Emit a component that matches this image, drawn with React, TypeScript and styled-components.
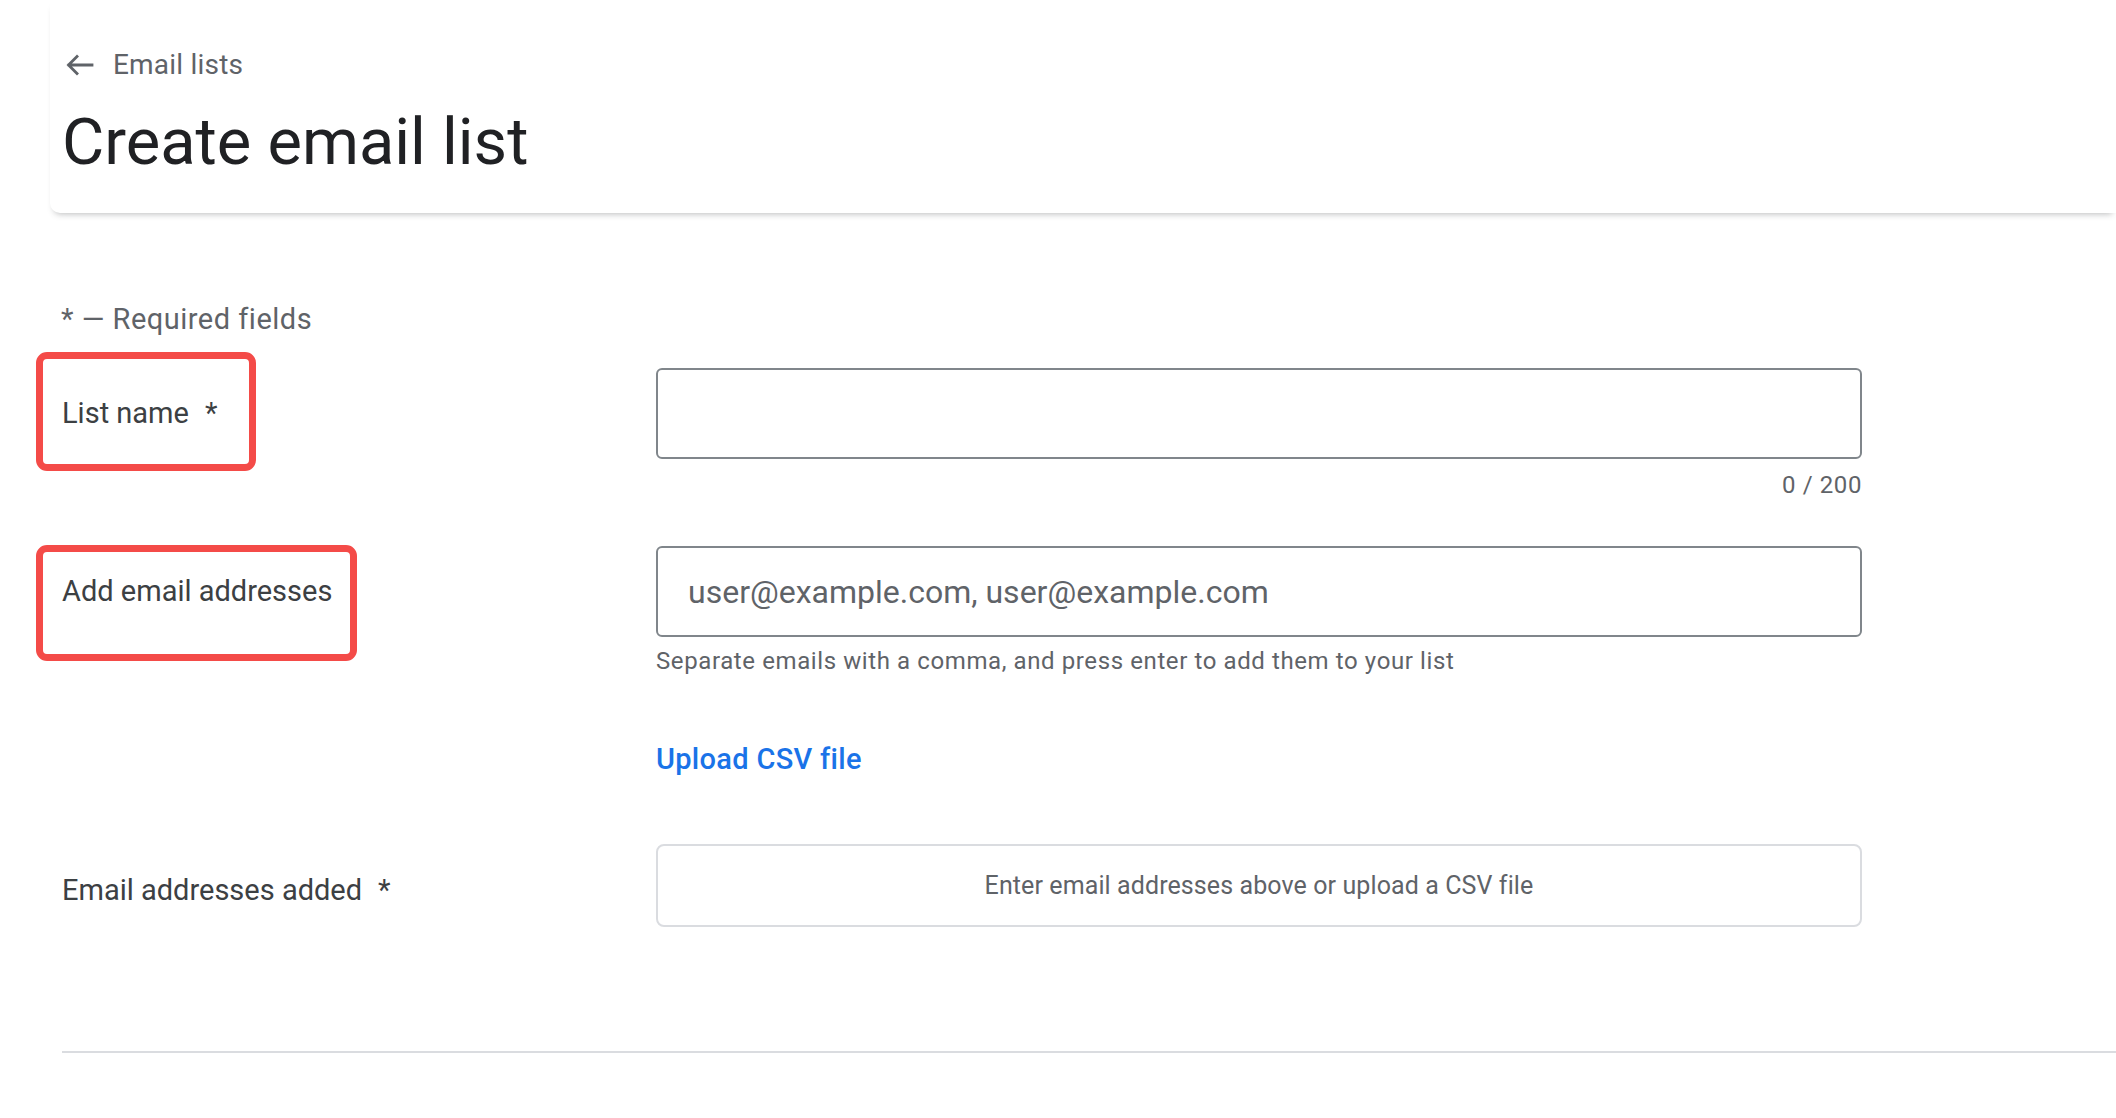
import styled, { createGlobalStyle } from 'styled-components'

const GlobalStyle = createGlobalStyle`
  body {
    margin: 0;
    background: #ffffff;
    font-family: Roboto, "Liberation Sans", Arial, sans-serif;
    color: #3c4043;
  }
`

const Page = styled.div`
  min-height: 100vh;
  overflow: hidden;
  background: #ffffff;
`

const Header = styled.header`
  margin-left: 50px;
  padding: 51px 0 39px 12px;
  background: #ffffff;
  border-bottom-left-radius: 10px;
  box-shadow: 0 5px 6px -4px rgba(60, 64, 67, 0.35);
`

const Breadcrumb = styled.a`
  display: flex;
  align-items: center;
  gap: 17px;
  height: 28px;
  font-size: 28px;
  line-height: 28px;
  letter-spacing: 0.2px;
  color: #5f6368;
  text-decoration: none;
`

const Title = styled.h1`
  margin: 31px 0 0;
  font-size: 65px;
  line-height: 64px;
  font-weight: 400;
  color: #202124;
`

const Form = styled.div`
  padding: 92px 0 0 36px;
`

const RequiredNote = styled.p`
  margin: 0 0 19px 25px;
  font-size: 29px;
  line-height: 28px;
  letter-spacing: 0.5px;
  color: #5f6368;
`

const Row = styled.div<{ $gap: number }>`
  display: grid;
  grid-template-columns: 620px 1206px;
  align-items: start;
  margin-top: ${p => p.$gap}px;
`

const Label = styled.label<{ $boxed?: boolean; $pad: string }>`
  justify-self: start;
  border: 7px solid ${p => (p.$boxed ? '#f44b48' : 'transparent')};
  border-radius: 11px;
  padding: ${p => p.$pad};
  font-size: 29px;
  line-height: 28px;
  color: #3c4043;
  white-space: nowrap;
`

const Req = styled.span`
  margin-left: 16px;
`

const Field = styled.div<{ $offset: number }>`
  display: flex;
  flex-direction: column;
  margin-top: ${p => p.$offset}px;
`

const TextInput = styled.input<{ $height: number }>`
  box-sizing: border-box;
  width: 100%;
  height: ${p => p.$height}px;
  border: 2px solid #80868b;
  border-radius: 6px;
  padding: 0 30px;
  font-family: inherit;
  font-size: 32px;
  color: #202124;
  background: #ffffff;
  outline: none;

  &::placeholder {
    color: #5f6368;
  }
`

const Hint = styled.div<{ $right?: boolean }>`
  align-self: ${p => (p.$right ? 'flex-end' : 'flex-start')};
  font-size: 24px;
  line-height: 28px;
  letter-spacing: 0.6px;
  color: #5f6368;
`

const Counter = styled(Hint)`
  margin-top: 12px;
`

const Helper = styled(Hint)`
  margin-top: 10px;
`

const UploadLink = styled.a`
  align-self: flex-start;
  margin-top: 70px;
  font-size: 29px;
  line-height: 28px;
  letter-spacing: 0.3px;
  font-weight: 500;
  color: #1a73e8;
  text-decoration: none;
`

const AddedBox = styled.div`
  box-sizing: border-box;
  height: 83px;
  border: 2px solid #dadce0;
  border-radius: 8px;
  display: flex;
  align-items: center;
  justify-content: center;
  font-size: 25px;
  letter-spacing: 0.1px;
  color: #5f6368;
`

const Divider = styled.hr`
  margin: 119px 0 0 26px;
  border: none;
  height: 2px;
  background: #dadce0;
`

function BackArrow() {
  return (
    <svg width="34" height="28" viewBox="0 0 34 28" fill="none">
      <path
        d="M30 14H7M15 5.5L6.5 14L15 22.5"
        stroke="#5f6368"
        strokeWidth="2.8"
        strokeLinecap="square"
      />
    </svg>
  )
}

export default function App() {
  return (
    <Page>
      <GlobalStyle />
      <Header>
        <Breadcrumb href="#">
          <BackArrow />
          Email lists
        </Breadcrumb>
        <Title>Create email list</Title>
      </Header>

      <Form>
        <RequiredNote>* — Required fields</RequiredNote>

        <Row $gap={0}>
          <Label $boxed $pad="40px 32px 37px 19px">
            List name<Req>*</Req>
          </Label>
          <Field $offset={16}>
            <TextInput $height={91} />
            <Counter $right>0 / 200</Counter>
          </Field>
        </Row>

        <Row $gap={46}>
          <Label $boxed $pad="25px 18px 49px 19px">
            Add email addresses
          </Label>
          <Field $offset={1}>
            <TextInput $height={91} placeholder="user@example.com, user@example.com" />
            <Helper>Separate emails with a comma, and press enter to add them to your list</Helper>
            <UploadLink href="#">Upload CSV file</UploadLink>
          </Field>
        </Row>

        <Row $gap={71}>
          <Label $pad="25px 17px 21px 19px">
            Email addresses added<Req>*</Req>
          </Label>
          <Field $offset={0}>
            <AddedBox>Enter email addresses above or upload a CSV file</AddedBox>
          </Field>
        </Row>

        <Divider />
      </Form>
    </Page>
  )
}
